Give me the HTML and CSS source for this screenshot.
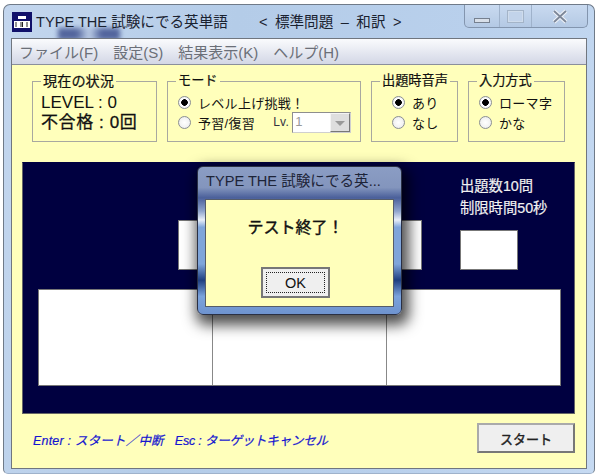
FILE: index.html
```html
<!DOCTYPE html>
<html lang="ja">
  <head>
    <meta charset="UTF-8" />
    <title>TYPE THE 試験にでる英単語</title>
    <link rel="stylesheet" href="styles.css">
  </head>
  <body>
    <div class="window">
      <div class="blur-blob"></div>
      <div class="titlebar">
        <svg class="app-icon" width="20" height="20" viewBox="0 0 20 20">
          <rect width="20" height="20" fill="#10106a" />
          <rect x="6" y="4" width="8" height="3" fill="#fff" />
          <rect x="2" y="9" width="16" height="7" fill="#fff" />
          <path d="M4 10v5M9 10v5M10.5 10v5M15 10v5" stroke="#222" stroke-width="1" />
        </svg>
        <span class="app-title">TYPE THE 試験にでる英単語</span>
        <span class="app-sub">&lt; 標準問題 – 和訳 &gt;</span>
        <div class="caption-btns">
          <div class="cap-btn cap-min"><span class="min-glyph"></span></div>
          <div class="cap-btn cap-max"><span class="max-glyph"></span></div>
          <div class="cap-btn cap-close">
            <svg width="18" height="15" viewBox="0 0 18 15">
              <path d="M3 2L15 13M15 2L3 13" stroke="#eef2f8" stroke-width="4" />
              <path d="M3 2L15 13M15 2L3 13" stroke="#7d8798" stroke-width="1.8" />
            </svg>
          </div>
        </div>
      </div>
      <div class="client">
        <div class="menubar">
          <span>ファイル(F)</span>
          <span>設定(S)</span>
          <span>結果表示(K)</span>
          <span>ヘルプ(H)</span>
        </div>
        <div class="content">
          <div class="groups">
            <fieldset class="group group-status">
              <legend>現在の状況</legend>
              <div class="level">LEVEL : 0</div>
              <div class="fail">不合格 : 0回</div>
            </fieldset>
            <fieldset class="group group-mode">
              <legend>モード</legend>
              <div class="radio-row"><span class="radio on"></span>レベル上げ挑戦！</div>
              <div class="radio-row">
                <span class="radio"></span>予習/復習
                <span class="lv">Lv.</span>
                <span class="lv-select"><span class="lv-value">1</span><span class="lv-arrow"></span></span>
              </div>
            </fieldset>
            <fieldset class="group group-voice">
              <legend>出題時音声</legend>
              <div class="radio-row"><span class="radio on"></span>あり</div>
              <div class="radio-row"><span class="radio"></span>なし</div>
            </fieldset>
            <fieldset class="group group-input">
              <legend>入力方式</legend>
              <div class="radio-row"><span class="radio on"></span>ローマ字</div>
              <div class="radio-row"><span class="radio"></span>かな</div>
            </fieldset>
          </div>

          <div class="panel">
            <div class="panel-top">
              <div class="word-box"></div>
              <div class="side">
                <div class="side-text">出題数10問</div>
                <div class="side-text">制限時間50秒</div>
                <div class="time-box"></div>
              </div>
            </div>
            <div class="answers">
              <div class="answer"></div>
              <div class="answer"></div>
              <div class="answer"></div>
            </div>
          </div>

          <div class="footer">
            <div class="hint">
              <span class="hint-enter">Enter : スタート／中断</span>
              <span class="hint-esc">Esc : ターゲットキャンセル</span>
            </div>
            <button class="start-btn">スタート</button>
          </div>
        </div>
      </div>

      <div class="dialog">
        <div class="dialog-title">TYPE THE 試験にでる英...</div>
        <div class="dialog-body">
          <div class="dialog-msg">テスト終了！</div>
          <button class="ok-btn"><span class="ok-focus">OK</span></button>
        </div>
      </div>
    </div>
  </body>
</html>
```

FILE: styles.css
```css
* {
  box-sizing: border-box;
}
body {
  margin: 0;
  height: 475px;
  overflow: hidden;
  background-color: #fff;
  font-family: "Liberation Sans", "Noto Sans CJK JP", sans-serif;
  color: #111;
}
.window {
  position: relative;
  width: 592px;
  height: 470px;
  margin: 4px 0 0 3px;
  padding: 0 7px;
  background: linear-gradient(100deg, #c3d6ee 0%, #b4cce8 35%, #b9d0ec 70%, #c6daf2 100%);
  border: 1px solid #6f7a88;
  border-bottom-color: #9fb2cb;
  border-radius: 7px 7px 5px 5px;
}
.blur-blob {
  position: absolute;
  left: 54px;
  top: 23px;
  width: 62px;
  height: 12px;
  background: linear-gradient(90deg, #26377c 0, #26377c 30%, #c0d0e8 50%, #26377c 70%, #26377c 100%);
  opacity: 0.7;
  filter: blur(2.5px);
}
.titlebar {
  position: relative;
  display: flex;
  height: 33px;
  padding: 7px 0 0 1px;
  align-items: flex-start;
}
.app-icon {
  flex: none;
}
.app-title {
  margin-left: 4px;
  font-size: 14.6px;
  line-height: 20px;
  color: #1a2230;
}
.app-sub {
  margin-left: 31px;
  font-size: 14.6px;
  line-height: 20px;
  color: #1a2230;
  word-spacing: 3.4px;
}
.caption-btns {
  position: absolute;
  right: -1px;
  top: 0;
  display: flex;
  height: 23px;
  border: 1px solid #8395ae;
  border-top: none;
  border-radius: 0 0 5px 5px;
  background: linear-gradient(#c9daf0, #b4c9e4);
}
.cap-btn {
  display: flex;
  align-items: center;
  justify-content: center;
  height: 100%;
  border-left: 1px solid #9fb2cb;
}
.cap-btn:first-child {
  border-left: none;
}
.cap-min {
  width: 34px;
}
.cap-max {
  width: 32px;
}
.cap-close {
  width: 56px;
}
.min-glyph {
  width: 16px;
  height: 5px;
  margin-top: 8px;
  background: #d8dfe9;
  border: 1px solid #76808f;
}
.max-glyph {
  width: 17px;
  height: 13px;
  border: 2px solid #cfdcec;
  outline: 1px solid #a4b4c8;
  outline-offset: -1px;
  background: #c2d3ea;
}
.client {
  position: relative;
  height: 431px;
  border: 1px solid #70767f;
  background-color: #ffffbb;
}
.menubar {
  display: flex;
  gap: 15px;
  height: 26px;
  padding: 0 7px;
  align-items: center;
  font-size: 15px;
  color: #6b6f78;
  background: linear-gradient(#fafbfd, #d3d7e6);
  border-bottom: 1px solid #8a8f9c;
}
.content {
  padding: 0 11px 0 10px;
}
.groups {
  display: flex;
  height: 97px;
  padding: 7px 0 0 10px;
}
.group {
  flex: none;
  height: 70px;
  margin: 0 10px 0 0;
  padding: 0;
  border: 1px solid #a8a8a0;
  font-size: 13px;
}
.group legend {
  margin-left: 8px;
  padding: 0 2px;
  font-size: 13.2px;
  line-height: 18px;
  white-space: nowrap;
  -webkit-text-stroke: 0.2px #111;
}
.group-status {
  width: 125px;
}
.group-status legend {
  font-size: 14.2px;
}
.group-status .level,
.group-status .fail {
  margin-left: 8px;
}
.group-mode {
  width: 194px;
}
.group-mode .radio-row,
.group-input .radio-row {
  margin-left: 10px;
}
.group-voice {
  width: 87px;
}
.group-voice .radio-row {
  margin-left: 20px;
}
.group-input {
  width: 97px;
}
.level,
.fail {
  font-size: 17px;
  line-height: 20px;
}
.level {
  margin-top: 3px;
}
.fail {
  letter-spacing: 0.6px;
  -webkit-text-stroke: 0.3px #111;
}
.radio-row {
  display: flex;
  align-items: center;
  height: 20px;
  font-size: 13px;
  letter-spacing: 0.3px;
  white-space: nowrap;
}
.radio-row:first-of-type {
  margin-top: 2px;
}
.radio {
  flex: none;
  width: 13px;
  height: 13px;
  margin-right: 7px;
  border: 1px solid #8b8f94;
  border-radius: 50%;
  background: radial-gradient(#fff, #f2f2f2 60%, #d4d6da);
}
.radio.on {
  background: radial-gradient(#000 0, #000 3px, #fff 3.6px, #e4e6ea);
}
.lv {
  margin-left: 18px;
  color: #33333f;
  font-size: 12px;
}
.lv-select {
  display: flex;
  width: 59px;
  height: 21px;
  margin-left: 3px;
  background: #fff;
  border: 1px solid #8e8e8e;
  border-right-color: #cfcfcf;
  border-bottom-color: #cfcfcf;
}
.lv-value {
  flex: 1;
  padding-left: 2px;
  color: #999;
  font-size: 13px;
  line-height: 18px;
}
.lv-arrow {
  position: relative;
  width: 20px;
  background: #dedede;
  border: 1px solid #f4f4f4;
  border-right-color: #777;
  border-bottom-color: #777;
}
.lv-arrow::after {
  content: "";
  position: absolute;
  left: 4px;
  top: 7px;
  border: 5px solid transparent;
  border-top: 5px solid #9a9a9a;
  border-bottom: none;
}
.panel {
  height: 252px;
  background-color: #000040;
  border: 1px solid #666;
  border-top-color: #000040;
  padding: 0 13px 0 15px;
}
.panel-top {
  display: flex;
  align-items: flex-end;
  height: 107px;
}
.word-box {
  width: 244px;
  height: 50px;
  margin-left: 140px;
  background: #fff;
  border: 1px solid #777;
}
.side {
  margin-left: 38px;
}
.side-text {
  color: #f0f0f0;
  font-size: 14.3px;
  line-height: 22px;
  white-space: nowrap;
  -webkit-text-stroke: 0.2px #f0f0f0;
}
.time-box {
  width: 58px;
  height: 40px;
  margin-top: 11px;
  background: #fff;
  border: 1px solid #777;
}
.answers {
  display: flex;
  height: 97px;
  margin-top: 19px;
  background: #fff;
  border: 1px solid #777;
}
.answer {
  flex: 1;
  border-left: 1px solid #888;
}
.answer:first-child {
  border-left: none;
}
.footer {
  display: flex;
  align-items: flex-start;
  justify-content: space-between;
  margin-top: 9px;
  padding-left: 11px;
}
.hint {
  display: flex;
  gap: 11px;
  margin-top: 7px;
  color: #1515d0;
  font-size: 12.5px;
  font-style: italic;
  white-space: nowrap;
  -webkit-text-stroke: 0.2px #1515d0;
}
.hint-enter {
  letter-spacing: 0.2px;
}
.hint-esc {
  letter-spacing: -0.2px;
}
.start-btn {
  width: 98px;
  height: 30px;
  background: #efefef;
  border: 2px solid #777;
  border-top-color: #aaa;
  border-left-color: #aaa;
  font-family: inherit;
  font-size: 13px;
  color: #222;
  -webkit-text-stroke: 0.4px #222;
}
.dialog {
  position: absolute;
  left: 193px;
  top: 161px;
  width: 205px;
  height: 149px;
  padding: 0 7px 7px;
  border: 1px solid #2a3044;
  border-radius: 6px;
  background: linear-gradient(#8b9dc4 0, #8395bd 14%, #4a5f9a 21%, #8fa4cc 30%, #e8eef8 36%, #7fa5da 41%, #7fa5da 66%, #1f3f80 77%, #7ba3dc 88%, #6e93cf 100%);
  box-shadow: 3px 6px 14px 4px rgba(0, 0, 0, 0.7);
}
.dialog-title {
  height: 32px;
  padding-left: 1px;
  color: #1d2438;
  font-size: 14.6px;
  line-height: 29px;
  white-space: nowrap;
}
.dialog-body {
  display: flex;
  flex-direction: column;
  align-items: center;
  height: 108px;
  padding-right: 8px;
  background-color: #ffffbb;
  border: 1px solid #555c68;
}
.dialog-msg {
  margin-top: 17px;
  font-size: 16px;
  line-height: 22px;
  color: #111;
  -webkit-text-stroke: 0.4px #111;
}
.ok-btn {
  width: 69px;
  height: 31px;
  margin-top: 28px;
  padding: 3px;
  background: #efefef;
  border: 2px solid #777;
  font-family: inherit;
  font-size: 14.5px;
  color: #111;
}
.ok-focus {
  display: block;
  height: 100%;
  line-height: 20px;
  border: 1px dotted #222;
}
```
